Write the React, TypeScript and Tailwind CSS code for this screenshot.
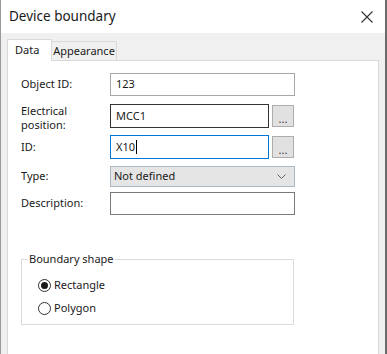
import React from "react";

const font = { fontFamily: '"Noto Sans", "Open Sans", sans-serif' };

const DotsButton = () => (
  <button className="ml-[3px] flex h-[22px] w-[22px] items-center justify-center border border-[#adadad] bg-[#e1e1e1] pt-[4px] text-[11px] leading-none text-[#333]">
    ...
  </button>
);

export default function App() {
  return (
    <div
      style={font}
      className="flex h-[354px] w-[387px] flex-col overflow-hidden border-l border-r-2 border-l-[#9a9a9a] border-r-[#6b6b6b] bg-[#f0f0f0] text-[11px] text-[#1a1a1a]"
    >
      {/* title bar */}
      <div className="flex h-[33px] shrink-0 items-center justify-between bg-white pl-[8px] pr-[10px]">
        <span className="text-[13.5px] text-[#1a1a1a]">Device boundary</span>
        <svg width="12" height="12" viewBox="0 0 12 12" className="mr-[2px]">
          <path d="M0.5 0.5 L11.5 11.5 M11.5 0.5 L0.5 11.5" stroke="#333" strokeWidth="1.1" fill="none" />
        </svg>
      </div>

      {/* tabs */}
      <div className="ml-[6px] mr-[6px] mt-[6px] flex h-[21px] items-end">
        <div className="relative z-10 -mb-px flex h-[22px] w-[45px] items-center border border-b-0 border-[#d9d9d9] bg-white pl-[7px]">
          Data
        </div>
        <div className="flex h-[19px] w-[65px] items-center justify-center border border-b-0 border-l-0 border-[#d9d9d9] bg-[#f0f0f0] pt-px">
          Appearance
        </div>
      </div>

      {/* panel */}
      <div className="ml-[6px] mr-[6px] flex-1 border border-b-0 border-[#d9d9d9] bg-white pl-[13px] pt-[12px]">
        <div className="flex h-[23px] items-center">
          <span className="w-[89px]">Object ID:</span>
          <div className="flex h-[23px] w-[185px] items-center border border-[#a8a8a8] px-[5px]">123</div>
        </div>

        <div className="mt-[8px] flex h-[24px] items-center">
          <span className="w-[89px] pt-[4px] leading-[14px]">
            Electrical
            <br />
            position:
          </span>
          <div className="flex h-[24px] w-[159px] items-center border border-[#333] px-[5px]">MCC1</div>
          <DotsButton />
        </div>

        <div className="mt-[7px] flex h-[24px] items-center">
          <span className="w-[89px]">ID:</span>
          <div className="flex h-[24px] w-[159px] items-center border border-[#0078d7] px-[5px]">
            X10<span className="ml-px inline-block h-[14px] w-px bg-black" />
          </div>
          <DotsButton />
        </div>

        <div className="mt-[7px] flex h-[21px] items-center">
          <span className="w-[89px]">Type:</span>
          <div className="flex h-[21px] w-[185px] items-center justify-between border border-[#acb8c6] bg-[#e5e5e5] pl-[3px] pr-[8px]">
            <span>Not defined</span>
            <svg width="9" height="5" viewBox="0 0 9 5">
              <path d="M0.5 0.5 L4.5 4.5 L8.5 0.5" stroke="#606060" fill="none" />
            </svg>
          </div>
        </div>

        <div className="mt-[5px] flex h-[23px] items-center">
          <span className="w-[89px]">Description:</span>
          <div className="h-[23px] w-[185px] border border-[#7a7a7a]" />
        </div>

        {/* group box */}
        <div className="relative mt-[44px] h-[66px] w-[273px] border border-[#dcdcdc]">
          <span className="absolute left-[6px] top-[-9px] bg-white px-px leading-[16px]">Boundary shape</span>
          <div className="flex flex-col gap-[8px] pl-[16px] pt-[18px]">
            <label className="flex h-[15px] items-center gap-[3px]">
              <span className="flex h-[13px] w-[13px] items-center justify-center rounded-full border border-[#333]">
                <span className="h-[7px] w-[7px] rounded-full bg-[#1a1a1a]" />
              </span>
              Rectangle
            </label>
            <label className="flex h-[15px] items-center gap-[3px]">
              <span className="h-[13px] w-[13px] rounded-full border border-[#333]" />
              Polygon
            </label>
          </div>
        </div>
      </div>
    </div>
  );
}
